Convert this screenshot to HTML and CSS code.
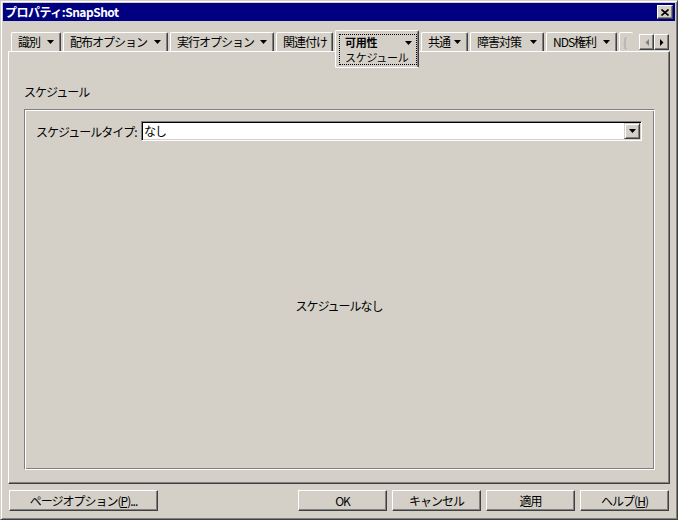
FILE: index.html
```html
<!DOCTYPE html>
<html lang="ja">
<head>
<meta charset="utf-8">
<title>プロパティ:SnapShot</title>
<link rel="stylesheet" href="styles.css">
</head>
<body>
<div class="window">
  <div class="titlebar">
    <span class="title">プロパティ:SnapShot</span>
    <span class="close-btn"><svg width="8" height="7" viewBox="0 0 8 7"><path d="M0.5 0.5 L7.5 6.5 M7.5 0.5 L0.5 6.5" stroke="#000" stroke-width="1.6" fill="none"/></svg></span>
  </div>

  <div class="tabstrip">
    <div class="tab t1"><span>識別</span><svg class="arrow" width="7" height="4" viewBox="0 0 7 4"><path d="M0 0H7L3.5 4Z"/></svg></div>
    <div class="tab t2"><span>配布オプション</span><svg class="arrow" width="7" height="4" viewBox="0 0 7 4"><path d="M0 0H7L3.5 4Z"/></svg></div>
    <div class="tab t3"><span>実行オプション</span><svg class="arrow" width="7" height="4" viewBox="0 0 7 4"><path d="M0 0H7L3.5 4Z"/></svg></div>
    <div class="tab t4"><span>関連付け</span></div>
    <div class="tab-sel">
      <div class="focus">
        <div class="sel-line"><b>可用性</b><svg class="arrow" width="7" height="4" viewBox="0 0 7 4"><path d="M0 0H7L3.5 4Z"/></svg></div>
        <div class="sel-sub">スケジュール</div>
      </div>
    </div>
    <div class="tab t6"><span>共通</span><svg class="arrow" width="7" height="4" viewBox="0 0 7 4"><path d="M0 0H7L3.5 4Z"/></svg></div>
    <div class="tab t7"><span>障害対策</span><svg class="arrow" width="7" height="4" viewBox="0 0 7 4"><path d="M0 0H7L3.5 4Z"/></svg></div>
    <div class="tab t8"><span>NDS権利</span><svg class="arrow" width="7" height="4" viewBox="0 0 7 4"><path d="M0 0H7L3.5 4Z"/></svg></div>
    <div class="tab t9"><span>{</span></div>
    <div class="scroller">
      <span class="sbtn"><svg width="4" height="7" viewBox="0 0 4 7"><path d="M4 0V7L0.5 3.5Z" fill="#808080"/></svg></span>
      <span class="sbtn"><svg width="4" height="7" viewBox="0 0 4 7"><path d="M0 0V7L3.5 3.5Z" fill="#000"/></svg></span>
    </div>
  </div>

  <div class="panel">
    <div class="section-label">スケジュール</div>
    <div class="groupbox">
      <div class="field-row">
        <span class="field-label">スケジュールタイプ:</span>
        <div class="combo">
          <span class="combo-text">なし</span>
          <span class="combo-btn"><svg width="7" height="4" viewBox="0 0 7 4"><path d="M0 0H7L3.5 4Z"/></svg></span>
        </div>
      </div>
      <div class="empty">スケジュールなし</div>
    </div>
  </div>

  <div class="button-row">
    <button class="btn btn-page">ページオプション(<u>P</u>)...</button>
    <div class="btn-group">
      <button class="btn">OK</button>
      <button class="btn">キャンセル</button>
      <button class="btn">適用</button>
      <button class="btn">ヘルプ(<u>H</u>)</button>
    </div>
  </div>
</div>
</body>
</html>
```

FILE: styles.css
```css
html, body {
  margin: 0;
  padding: 0;
  background: #d4d0c8;
}

body {
  font-family: "Noto Sans CJK JP", "DejaVu Sans", sans-serif;
  font-size: 12px;
  letter-spacing: -1px;
  color: #000;
}

.window {
  width: 678px;
  height: 520px;
  box-sizing: border-box;
  background: #d4d0c8;
  border: 1px solid;
  border-color: #d4d0c8 #404040 #404040 #d4d0c8;
  box-shadow: inset 1px 1px #fff, inset -1px -1px #808080;
  padding: 2px;
  display: flex;
  flex-direction: column;
}

/* title bar */
.titlebar {
  height: 18px;
  background: #000080;
  display: flex;
  align-items: center;
  justify-content: space-between;
  padding: 0 2px 0 2px;
  color: #fff;
  font-weight: bold;
  line-height: 18px;
}

.title {
  letter-spacing: -0.5px;
}

.close-btn {
  width: 16px;
  height: 14px;
  box-sizing: border-box;
  background: #d4d0c8;
  border: 1px solid;
  border-color: #fff #404040 #404040 #fff;
  box-shadow: inset -1px -1px #808080;
  display: flex;
  align-items: center;
  justify-content: center;
}

/* tabs */
.tabstrip {
  margin-top: 9px;
  height: 21px;
  display: flex;
  align-items: flex-start;
  gap: 2px;
  padding: 0 6px 0 8px;
  line-height: 14px;
}

.tab {
  margin-top: 2px;
  height: 19px;
  box-sizing: border-box;
  border-top: 1px solid #fff;
  border-left: 1px solid #fff;
  border-right: 1px solid #404040;
  border-top-left-radius: 2px;
  border-top-right-radius: 2px;
  box-shadow: inset -1px 0 #808080;
  display: flex;
  align-items: center;
  justify-content: space-between;
  padding: 0 6px 0 6px;
  white-space: nowrap;
}

.arrow {
  flex: none;
}

.t1 { width: 50px; }
.t2 { width: 105px; }
.t3 { width: 104px; }
.t4 { width: 57px; }
.t6 { width: 47px; }
.t7 { width: 74px; }
.t8 { width: 71px; }
.t9 {
  width: 14px;
  overflow: hidden;
  color: #a0a0a0;
  border-right: none;
  box-shadow: none;
  padding: 0 0 0 3px;
}

.tab-sel {
  position: relative;
  z-index: 1;
  width: 84px;
  height: 38px;
  box-sizing: border-box;
  background: #d4d0c8;
  border-top: 1px solid #fff;
  border-left: 1px solid #fff;
  border-right: 1px solid #404040;
  border-bottom: 1px solid #fff;
  border-radius: 2px;
  box-shadow: inset -1px 0 #808080;
  padding: 3px 1px 0 3px;
}

.focus {
  border: 1px dotted #000;
  padding: 0 4px 0 5px;
  font-size: 11px;
  letter-spacing: -0.3px;
  line-height: 15px;
}

.sel-line {
  display: flex;
  align-items: center;
  justify-content: space-between;
  height: 15px;
}

.sel-sub {
  height: 14px;
  line-height: 14px;
}

.sel-line b {
  font-weight: bold;
}

/* scroll buttons */
.scroller {
  margin-left: auto;
  margin-top: 4px;
  display: flex;
}

.sbtn {
  width: 15px;
  height: 16px;
  box-sizing: border-box;
  background: #d4d0c8;
  border: 1px solid;
  border-color: #fff #404040 #404040 #fff;
  box-shadow: inset -1px -1px #808080;
  display: flex;
  align-items: center;
  justify-content: center;
}

/* main panel */
.panel {
  margin-left: 5px;
  width: 662px;
  height: 433px;
  box-sizing: border-box;
  border: 1px solid;
  border-color: #fff #404040 #404040 #fff;
  box-shadow: inset -1px -1px #808080;
  padding: 33px 14px 0 15px;
  display: flex;
  flex-direction: column;
}

.section-label {
  line-height: 14px;
}

.groupbox {
  margin-top: 10px;
  width: 631px;
  height: 361px;
  box-sizing: border-box;
  border: 1px solid;
  border-color: #808080 #fff #fff #808080;
  box-shadow: inset 1px 1px #fff, inset -1px -1px #808080;
  padding: 11px 12px 0 11px;
  display: flex;
  flex-direction: column;
}

.field-row {
  display: flex;
  align-items: center;
  height: 20px;
}

.field-label {
  width: 105px;
  flex: none;
  white-space: nowrap;
}

.combo {
  flex: 1;
  height: 20px;
  box-sizing: border-box;
  background: #fff;
  border: 1px solid;
  border-color: #808080 #fff #fff #808080;
  box-shadow: inset 1px 1px #000, inset -1px -1px #d4d0c8;
  display: flex;
  align-items: center;
  justify-content: space-between;
  padding: 0 1px 0 2px;
}

.combo-text {
  line-height: 16px;
}

.combo-btn {
  width: 16px;
  height: 16px;
  box-sizing: border-box;
  background: #d4d0c8;
  border: 1px solid;
  border-color: #d4d0c8 #404040 #404040 #d4d0c8;
  box-shadow: inset 1px 1px #fff, inset -1px -1px #808080;
  display: flex;
  align-items: center;
  justify-content: center;
}

.empty {
  flex: 1;
  display: flex;
  align-items: center;
  justify-content: center;
}

/* bottom buttons */
.button-row {
  margin-top: 6px;
  padding: 0 6px;
  display: flex;
  justify-content: space-between;
}

.btn-group {
  display: flex;
  gap: 5px;
}

.btn {
  width: 89px;
  height: 21px;
  box-sizing: border-box;
  margin: 0;
  padding: 0;
  background: #d4d0c8;
  border: 1px solid;
  border-color: #fff #404040 #404040 #fff;
  box-shadow: inset -1px -1px #808080;
  font: inherit;
  letter-spacing: inherit;
  color: #000;
  line-height: 18px;
}

.btn-page {
  width: 149px;
}

.btn u {
  text-decoration: underline;
}
```
